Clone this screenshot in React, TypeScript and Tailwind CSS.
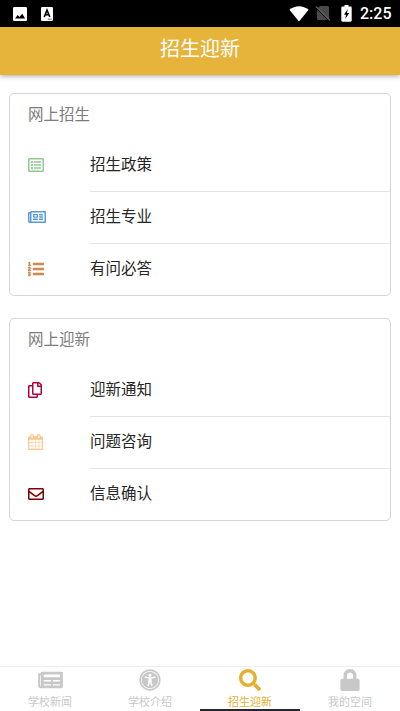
import type { ReactNode } from 'react';
import {
  FaListOl,
  FaLock,
  FaNewspaper,
  FaRegCopy,
  FaRegEnvelope,
  FaRegListAlt,
  FaRegNewspaper,
  FaSearch,
  FaUniversalAccess,
} from 'react-icons/fa';

interface MenuItem {
  label: string;
  icon: ReactNode;
}

// Calendar with a full day grid
function CalendarGrid() {
  return (
    <svg viewBox="0 0 1664 1792" className="h-4 w-[15px] text-[#fbc58c]" fill="currentColor">
      <path d="M128 1664h288v-288H128v288zm352 0h320v-288H480v288zm-352-352h288V992H128v320zm352 0h320V992H480v320zM128 928h288V640H128v288zm736 736h320v-288H864v288zM480 928h320V640H480v288zm768 736h288v-288h-288v288zm-384-352h320V992H864v320zM512 448V160q0-13-9.5-22.5T480 128h-64q-13 0-22.5 9.5T384 160v288q0 13 9.5 22.5T416 480h64q13 0 22.5-9.5T512 448zm736 864h288V992h-288v320zM864 928h320V640H864v288zm384 0h288V640h-288v288zm32-480V160q0-13-9.5-22.5T1248 128h-64q-13 0-22.5 9.5T1152 160v288q0 13 9.5 22.5t22.5 9.5h64q13 0 22.5-9.5t9.5-22.5zm384-64v1280q0 52-38 90t-90 38H128q-52 0-90-38t-38-90V384q0-52 38-90t90-38h128v-96q0-66 47-113T416 0h64q66 0 113 47t47 113v96h384v-96q0-66 47-113t113-47h64q66 0 113 47t47 113v96h128q52 0 90 38t38 90z" />
    </svg>
  );
}

const admission: MenuItem[] = [
  { label: '招生政策', icon: <FaRegListAlt className="size-4 text-[#8fca90]" /> },
  { label: '招生专业', icon: <FaRegNewspaper className="h-4 w-[18px] text-[#5b9bd5]" /> },
  { label: '有问必答', icon: <FaListOl className="size-4 stroke-[18px] text-[#cb8c52]" /> },
];

const welcome: MenuItem[] = [
  { label: '迎新通知', icon: <FaRegCopy className="h-4 w-[14px] text-[#b00040]" /> },
  { label: '问题咨询', icon: <CalendarGrid /> },
  { label: '信息确认', icon: <FaRegEnvelope className="size-4 text-[#800000]" /> },
];

const tabs = [
  { label: '学校新闻', icon: <FaNewspaper className="h-[22px] w-[25px]" />, active: false },
  { label: '学校介绍', icon: <FaUniversalAccess className="size-[22px]" />, active: false },
  { label: '招生迎新', icon: <FaSearch className="size-[22px]" />, active: true },
  { label: '我的空间', icon: <FaLock className="h-[22px] w-5" />, active: false },
];

function StatusBar() {
  return (
    <div className="flex h-[27px] shrink-0 items-center bg-black pl-[13px] pr-2 text-white">
      <svg viewBox="0 0 14 14" className="size-[14px]">
        <rect width="14" height="14" rx="1.2" fill="#fff" />
        <path d="M2 11.5 4.7 8l1.8 2 2.7-3.2 3 4.7z" fill="#000" />
      </svg>
      <svg viewBox="0 0 12 14" className="ml-[14px] h-[14px] w-3">
        <rect width="12" height="14" rx="1.2" fill="#fff" />
        <path d="M3.2 10 6 3.2 8.8 10M4.2 7.8h3.6" fill="none" stroke="#000" strokeWidth="1.6" />
        <path d="M6.8 12.2h4" stroke="#000" strokeWidth="0.8" strokeDasharray="1 .4" />
      </svg>
      <svg viewBox="0 0 20 16" className="ml-auto h-4 w-5" fill="#fff">
        <path d="M.4 3.8C6-.9 14-.9 19.6 3.8L10 15.6z" />
      </svg>
      <svg viewBox="0 0 16 17" className="ml-[6px] h-[17px] w-4">
        <path d="M5 1h7.5c.8 0 1.5.7 1.5 1.5V14L3 3zM2 4.5 12.5 15h-9C2.6 15 2 14.3 2 13.5z" fill="#4a4a4a" />
        <path d="m1 1.5 14 14" stroke="#626262" strokeWidth="1.2" />
      </svg>
      <svg viewBox="0 0 11 17" className="ml-[10px] h-[17px] w-[11px]">
        <path d="M3.5 0h4v1.6h2c.7 0 1.2.5 1.2 1.2v12.7c0 .7-.5 1.2-1.2 1.2h-8c-.7 0-1.2-.5-1.2-1.2V2.8c0-.7.5-1.2 1.2-1.2h2z" fill="#fff" />
        <path d="M6.8 4 3 9.8h2.100l-.9 4.200 4-6H5.900z" fill="#000" />
      </svg>
      <span className="ml-2 w-[32px] whitespace-nowrap font-['Roboto',sans-serif] text-base font-medium leading-none">2:25</span>
    </div>
  );
}

function MenuCard({ title, items }: { title: string; items: MenuItem[] }) {
  return (
    <section className="h-[203px] rounded-[5px] border border-[#d6d6d6] bg-white">
      <h2 className="flex h-[45px] items-center pb-[5px] pl-[18px] text-[15.5px] text-[#7c7c7c]">{title}</h2>
      {items.map((item, i) => (
        <div key={item.label} className={`flex items-stretch pl-[18px] ${i === 0 ? 'h-[53px]' : 'h-[52px]'}`}>
          <div className="flex w-[62px] items-center pb-[2px]">{item.icon}</div>
          <div
            className={`flex flex-1 items-center text-[15.5px] text-[#262626] ${
              i === 0 ? 'pb-[2px]' : 'pb-[4px]'
            } ${i < items.length - 1 ? 'border-b border-[#e4e4e4]' : ''}`}
          >
            {item.label}
          </div>
        </div>
      ))}
    </section>
  );
}

export default function App() {
  return (
    <div className="flex h-[711px] w-[400px] flex-col overflow-hidden bg-white font-['Noto_Sans_CJK_SC',sans-serif]">
      <StatusBar />
      <header className="z-10 flex h-[48px] shrink-0 items-center justify-center bg-[#e6b33b] pb-[7px] text-xl text-white shadow-[0_1px_5px_rgba(0,0,0,0.35)]">
        招生迎新
      </header>

      <main className="flex flex-1 flex-col gap-[22px] px-[9px] pt-[18px]">
        <MenuCard title="网上招生" items={admission} />
        <MenuCard title="网上迎新" items={welcome} />
      </main>

      <nav className="grid h-[45px] shrink-0 grid-cols-4 border-t border-[#ececec]">
        {tabs.map(tab => (
          <div
            key={tab.label}
            className={`flex flex-col items-center border-b-2 pt-[2px] ${
              tab.active ? 'border-[#26262f] text-[#e6b033]' : 'border-transparent text-[#c8c8c8]'
            }`}
          >
            {tab.icon}
            <span className="mt-[2px] text-[11px] leading-4">{tab.label}</span>
          </div>
        ))}
      </nav>
    </div>
  );
}
